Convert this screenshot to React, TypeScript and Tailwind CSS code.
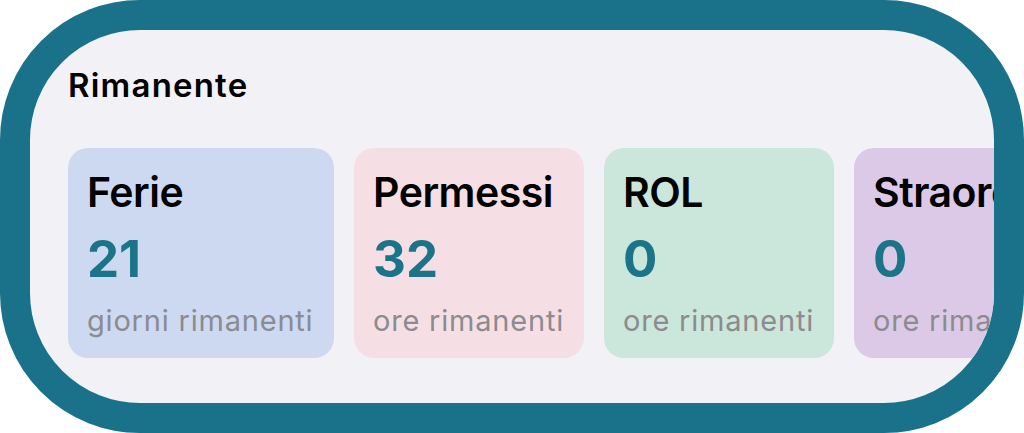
import React from "react";

const cards = [
  { title: "Ferie", value: "21", unit: "giorni rimanenti", bg: "bg-[#cdd9f0]", w: "w-[266px]" },
  { title: "Permessi", value: "32", unit: "ore rimanenti", bg: "bg-[#f5dfe5]", w: "w-[230px]" },
  { title: "ROL", value: "0", unit: "ore rimanenti", bg: "bg-[#cbe6da]", w: "w-[230px]" },
  { title: "Straordinari", value: "0", unit: "ore rimanenti", bg: "bg-[#dbc9e7]", w: "w-[300px]" },
];

export default function App() {
  return (
    <div className="w-[1024px] h-[433px] bg-white" style={{ fontFamily: "Inter, 'Noto Sans', sans-serif" }}>
      <div className="w-full h-full rounded-[140px] border-[30px] border-[#19718a] bg-[#f2f1f6] overflow-hidden pl-[38px] pt-[35px]">
        <h2 className="text-[33px] leading-[41px] font-semibold text-black tracking-[1.2px]">Rimanente</h2>
        <div className="mt-[42px] flex gap-[20px] flex-nowrap">
          {cards.map((c) => (
            <div key={c.title} className={`${c.bg} ${c.w} shrink-0 rounded-[20px] pl-[19px] pr-[20px] pt-[20px] pb-[20px] h-[210px] flex flex-col`}>
              <div className="text-[41px] leading-[49px] font-semibold text-black whitespace-nowrap tracking-[-0.5px]">{c.title}</div>
              <div className="mt-[11px] text-[51px] leading-[61px] font-bold text-[#1b7487] whitespace-nowrap">{c.value}</div>
              <div className="mt-[14px] text-[29px] leading-[35px] font-normal text-[#8b8b90] whitespace-nowrap tracking-[0.8px]">{c.unit}</div>
            </div>
          ))}
        </div>
      </div>
    </div>
  );
}
